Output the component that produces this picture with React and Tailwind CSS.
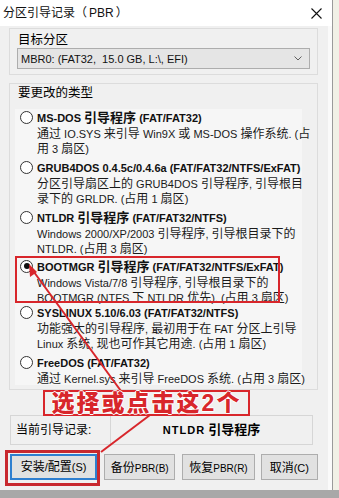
import React from 'react';

const CJK = /([\u2E80-\u9FFF\uFF00-\uFFEF]+)/;

// splits a string in Latin / CJK runs so each run can get its own size
function Mixed({ text, latin, cjk }) {
  return text.split(CJK).map((part, i) =>
    part === '' ? null : (
      <span key={i} className={i % 2 ? cjk : latin}>
        {part}
      </span>
    )
  );
}

const options = [
  {
    title: 'MS-DOS 引导程序 (FAT/FAT32)',
    lines: ['通过 IO.SYS 来引导 Win9X 或 MS-DOS 操作系统. (占', '用 3 扇区)'],
    mt: 'mt-0',
  },
  {
    title: 'GRUB4DOS 0.4.5c/0.4.6a (FAT/FAT32/NTFS/ExFAT)',
    lines: ['分区引导扇区上的 GRUB4DOS 引导程序, 引导根目', '录下的 GRLDR. (占用 1 扇区)'],
    mt: 'mt-[4px]',
  },
  {
    title: 'NTLDR 引导程序 (FAT/FAT32/NTFS)',
    lines: ['Windows 2000/XP/2003 引导程序, 引导根目录下的', 'NTLDR. (占用 3 扇区)'],
    mt: 'mt-[4px]',
  },
  {
    title: 'BOOTMGR 引导程序 (FAT/FAT32/NTFS/ExFAT)',
    lines: ['Windows Vista/7/8 引导程序, 引导根目录下的', 'BOOTMGR (NTFS 下 NTLDR 优先). (占用 3 扇区)'],
    mt: 'mt-[3px]',
    checked: true,
  },
  {
    title: 'SYSLINUX 5.10/6.03 (FAT/FAT32/NTFS)',
    lines: ['功能强大的引导程序, 最初用于在 FAT 分区上引导', 'Linux 系统, 现也可作其它用途. (占用 1 扇区)'],
    mt: 'mt-0',
  },
  {
    title: 'FreeDOS (FAT/FAT32)',
    lines: ['通过 Kernel.sys 来引导 FreeDOS 系统. (占用 3 扇区)'],
    mt: 'mt-[4px]',
  },
];

function Radio({ checked }) {
  return (
    <span className="w-[13px] h-[13px] rounded-full border border-[#333] bg-white flex items-center justify-center shrink-0">
      {checked && <span className="w-[6px] h-[6px] rounded-full bg-[#111]" />}
    </span>
  );
}

function Option({ opt }) {
  return (
    <div className={`relative pl-[5px] ${opt.mt}`}>
      {opt.checked && (
        <div className="absolute -top-[2px] left-0 w-[265px] h-[47px] border-2 border-[#d8262b]" />
      )}
      <div className="h-[16px] flex items-center gap-[4px]">
        <Radio checked={opt.checked} />
        <span className="font-bold text-[#111] whitespace-nowrap leading-[16px]">
          <Mixed text={opt.title} latin="text-[11px]" cjk="text-[13px]" />
        </span>
      </div>
      <div className="pl-[17px] text-[#1a1a1a]">
        {opt.lines.map((l) => (
          <div key={l} className="h-[15px] leading-[15px] whitespace-nowrap">
            <Mixed text={l} latin="text-[11px]" cjk="text-[12px]" />
          </div>
        ))}
      </div>
    </div>
  );
}

export default function App() {
  return (
    <div className="w-[339px] h-[498px] bg-[#f1f0e6] relative overflow-hidden flex flex-col font-['Liberation_Sans','Noto_Sans_CJK_SC',sans-serif] text-black">
      <div className="flex h-[490px]">
        <div className="w-[333px] bg-white border-r border-[#9a9a9a] flex flex-col">
          {/* title bar */}
          <div className="h-[26px] flex items-center justify-between pl-[3px] pr-[10px]">
            <span className="text-[12px] leading-[14px] text-[#111]">
              分区引导记录（<span className="px-[2px]">PBR</span>）
            </span>
            <svg width="11" height="11" viewBox="0 0 11 11">
              <path d="M0.5 0.5 L10.5 10.5 M10.5 0.5 L0.5 10.5" stroke="#111" strokeWidth="1.1" />
            </svg>
          </div>

          {/* client */}
          <div className="flex-1 bg-[#f0f0f0] pl-[9px] pr-[10px] pt-[2px] border-r-[4px] border-[#fafafa]">
            <div className="border border-[#dcdcdc] px-[7px] pt-[4px] pb-[5px]">
              <div className="h-[15px] leading-[15px] text-[12.5px] pl-[1px]">目标分区</div>
              <div className="h-[21px] border border-[#adadad] bg-[#e5e5e5] flex items-center justify-between pl-[3px] pr-[7px]">
                <span className="text-[11px] leading-[14px] whitespace-nowrap text-[#111]">
                  MBR0: (FAT32,&nbsp; 15.0 GB, L:\, EFI)
                </span>
                <svg width="8" height="5" viewBox="0 0 8 5">
                  <path d="M0.5 0.5 L4 4 L7.5 0.5" stroke="#606060" fill="none" strokeWidth="1" />
                </svg>
              </div>
            </div>

            <div className="mt-[8px] border border-[#dcdcdc] pt-[2px] pb-[4px]">
              <div className="h-[14px] leading-[14px] text-[12.5px] pl-[8px]">要更改的类型</div>
              <div className="mt-[9px] pl-[5px] pr-[15px]">
                <div className="bg-[#f6f6f6]">
                  {options.map((o) => (
                    <Option key={o.title} opt={o} />
                  ))}
                </div>
              </div>
            </div>

            {/* current record */}
            <div className="mt-[25px] ml-[1px] w-[303px] h-[30px] border border-[#d6d6d6] flex">
              <div className="w-[100px] border-r border-[#d6d6d6] flex items-center pl-[5px] text-[12px]">
                当前引导记录:
              </div>
              <div className="flex-1 flex items-center justify-center font-bold">
                <span className="text-[11px] tracking-[1px] mr-[3px]">NTLDR</span>
                <span className="text-[13px]">引导程序</span>
              </div>
            </div>

            {/* buttons */}
            <div className="mt-[9px] ml-[1px] flex gap-[7px] h-[26px]">
              <div className="relative w-[88px]">
                <div className="absolute -left-[5px] -top-[4px] -right-[3px] -bottom-[6px] border-[3px] border-[#c8282e]" />
                <button className="w-full h-full bg-[#e1e1e1] border-2 border-[#2f7fcf] text-[12px]">
                  <Mixed text="安装/配置(S)" latin="text-[11px]" cjk="text-[12px]" />
                </button>
              </div>
              <button className="w-[72px] h-full bg-[#e1e1e1] border border-[#adadad]">
                <Mixed text="备份PBR(B)" latin="text-[10px]" cjk="text-[12px]" />
              </button>
              <button className="w-[73px] h-full bg-[#e1e1e1] border border-[#adadad]">
                <Mixed text="恢复PBR(R)" latin="text-[10px]" cjk="text-[12px]" />
              </button>
              <button className="w-[58px] h-full bg-[#e1e1e1] border border-[#adadad] -ml-[1px]">
                <Mixed text="取消(C)" latin="text-[11px]" cjk="text-[12px]" />
              </button>
            </div>
          </div>
        </div>
      </div>
      <div className="h-[8px] bg-[#a8a8a8]" />

      {/* annotation */}
      <svg className="absolute left-0 top-0 pointer-events-none" width="339" height="498" viewBox="0 0 339 498">
        <path d="M31 268 L121 391" stroke="#d8262b" strokeWidth="2" />
        <path d="M29 264 L30 277 L37 272 Z" fill="#d8262b" />
        <path d="M150 415 L101 452" stroke="#d8262b" strokeWidth="2" />
      </svg>
      <div className="absolute left-[43px] top-[390px] w-[207px] h-[26px] border-2 border-[#d8262b] flex items-center justify-center">
        <span className="text-[23px] leading-[24px] font-black text-[#d8262b] tracking-[2px] whitespace-nowrap [text-shadow:1px_0_0_#fff,-1px_0_0_#fff,0_1px_0_#fff,0_-1px_0_#fff]">
          选择或点击这2个
        </span>
      </div>
    </div>
  );
}
